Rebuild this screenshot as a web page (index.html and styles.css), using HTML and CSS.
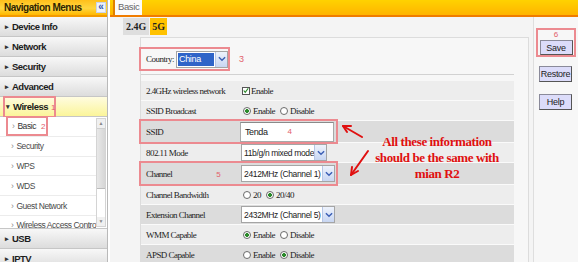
FILE: index.html
```html
<!DOCTYPE html>
<html lang="en">
<head>
    <meta charset="UTF-8" />
    <title>Wireless Basic</title>
    <link rel="stylesheet" href="styles.css">
</head>
<body>
<div class="page">
    <aside class="nav">
        <div class="nav-head">
            <span>Navigation Menus</span>
            <span class="collapse">&laquo;</span>
        </div>
        <div class="nav-item"><span class="tri">&#9656;</span>Device Info</div>
        <div class="nav-item"><span class="tri">&#9656;</span>Network</div>
        <div class="nav-item"><span class="tri">&#9656;</span>Security</div>
        <div class="nav-item"><span class="tri">&#9656;</span>Advanced</div>
        <div class="nav-item open">
            <span class="mark mark-wireless"><span class="tri">&#9662;</span>Wireless<i class="num">1</i></span>
        </div>
        <div class="sub">
            <ul class="sub-list">
                <li><span class="mark mark-basic"><span class="chev">&rsaquo;</span>Basic<i class="num">2</i></span></li>
                <li><span class="chev">&rsaquo;</span>Security</li>
                <li><span class="chev">&rsaquo;</span>WPS</li>
                <li><span class="chev">&rsaquo;</span>WDS</li>
                <li><span class="chev">&rsaquo;</span>Guest Network</li>
                <li><span class="chev">&rsaquo;</span>Wireless Access Control</li>
            </ul>
            <div class="scroll">
                <span class="scroll-btn">&#9650;</span>
                <span class="scroll-thumb"></span>
                <span class="scroll-track"></span>
                <span class="scroll-btn">&#9660;</span>
            </div>
        </div>
        <div class="nav-item"><span class="tri">&#9656;</span>USB</div>
        <div class="nav-item"><span class="tri">&#9656;</span>IPTV</div>
    </aside>

    <main class="main">
        <div class="topbar"><span class="tab">Basic</span></div>
        <div class="work">
            <section class="content">
                <div class="bands">
                    <span class="band">2.4G</span>
                    <span class="band on">5G</span>
                </div>
                <div class="panel">
                    <div class="country">
                        <span class="mark mark-country">
                            Country:
                            <span class="select country-select">
                                <span class="sel-text picked">China</span>
                                <span class="sel-btn"><svg width="8" height="6" viewBox="0 0 9 6"><path d="M1 1 L4.5 4.5 L8 1" fill="none" stroke="#3b5fb5" stroke-width="1.6"/></svg></span>
                            </span>
                        </span>
                        <i class="num">3</i>
                    </div>
                    <div class="rule"></div>

                    <div class="rows">
                        <div class="row">
                            <div class="pair">
                                <span class="lbl">2.4GHz wireless network</span>
                                <span class="val"><span class="check"><svg width="7" height="7" viewBox="0 0 8 8"><path d="M1 4 L3 6.5 L7 1" fill="none" stroke="#2a8a2a" stroke-width="1.6"/></svg></span>Enable</span>
                            </div>
                        </div>
                        <div class="row">
                            <div class="pair">
                                <span class="lbl">SSID Broadcast</span>
                                <span class="val"><span class="radio on"></span>Enable<span class="radio"></span>Disable</span>
                            </div>
                        </div>
                        <div class="row dark tall">
                            <div class="pair boxed">
                                <span class="lbl">SSID</span>
                                <span class="val"><span class="input">Tenda<i class="num">4</i></span></span>
                            </div>
                        </div>
                        <div class="row">
                            <div class="pair">
                                <span class="lbl">802.11 Mode</span>
                                <span class="val">
                                    <span class="select mode-select">
                                        <span class="sel-text">11b/g/n mixed mode</span>
                                        <span class="sel-btn"><svg width="8" height="6" viewBox="0 0 9 6"><path d="M1 1 L4.5 4.5 L8 1" fill="none" stroke="#3b5fb5" stroke-width="1.6"/></svg></span>
                                    </span>
                                </span>
                            </div>
                        </div>
                        <div class="row dark tall">
                            <div class="pair boxed">
                                <span class="lbl">Channel<i class="num">5</i></span>
                                <span class="val">
                                    <span class="select chan-select">
                                        <span class="sel-text">2412MHz (Channel 1)</span>
                                        <span class="sel-btn"><svg width="8" height="6" viewBox="0 0 9 6"><path d="M1 1 L4.5 4.5 L8 1" fill="none" stroke="#3b5fb5" stroke-width="1.6"/></svg></span>
                                    </span>
                                </span>
                            </div>
                        </div>
                        <div class="row">
                            <div class="pair">
                                <span class="lbl">Channel Bandwidth</span>
                                <span class="val"><span class="radio"></span>20<span class="radio on"></span>20/40</span>
                            </div>
                        </div>
                        <div class="row dark">
                            <div class="pair">
                                <span class="lbl">Extension Channel</span>
                                <span class="val">
                                    <span class="select chan-select">
                                        <span class="sel-text">2432MHz (Channel 5)</span>
                                        <span class="sel-btn"><svg width="8" height="6" viewBox="0 0 9 6"><path d="M1 1 L4.5 4.5 L8 1" fill="none" stroke="#3b5fb5" stroke-width="1.6"/></svg></span>
                                    </span>
                                </span>
                            </div>
                        </div>
                        <div class="row">
                            <div class="pair">
                                <span class="lbl">WMM Capable</span>
                                <span class="val"><span class="radio on"></span>Enable<span class="radio"></span>Disable</span>
                            </div>
                        </div>
                        <div class="row dark">
                            <div class="pair">
                                <span class="lbl">APSD Capable</span>
                                <span class="val"><span class="radio"></span>Enable<span class="radio on"></span>Disable</span>
                            </div>
                        </div>
                    </div>
                </div>
            </section>

            <aside class="actions">
                <div class="mark mark-save">
                    <i class="num">6</i>
                    <button class="btn">Save</button>
                </div>
                <button class="btn btn-restore">Restore</button>
                <button class="btn btn-help">Help</button>
            </aside>
        </div>
    </main>

    <!-- annotation drawn over the screenshot -->
    <svg class="arrows" width="578" height="262" viewBox="0 0 578 262">
        <g stroke="#e01010" stroke-width="2" fill="none" stroke-linecap="round">
            <path d="M362 137 L343 126"/>
            <path d="M343 126 L351 126 M343 126 L347 132"/>
            <path d="M368 151 L351 175"/>
            <path d="M351 175 L352 167 M351 175 L358 171"/>
        </g>
    </svg>
    <p class="note">All these information<br>should be the same with<br>mian R2</p>
</div>
</body>
</html>
```

FILE: styles.css
```css
* {
    box-sizing: border-box;
}

body {
    margin: 0;
    width: 578px;
    height: 262px;
    overflow: hidden;
    background: #fff;
    font-family: "Liberation Sans", Arial, sans-serif;
}

.page {
    position: relative;
    display: flex;
    height: 262px;
}

/* left navigation */

.nav {
    width: 108px;
    flex: none;
    display: flex;
    flex-direction: column;
    border-right: 1px solid #b9b9b9;
}

.nav-head {
    height: 17px;
    flex: none;
    display: flex;
    align-items: center;
    justify-content: space-between;
    padding: 0 1px 1px 4px;
    background: linear-gradient(#ffbf1a, #ffd640 55%, #ffb800);
    border-bottom: 2px solid #f39a00;
    color: #2e2200;
    font-size: 10px;
    font-weight: bold;
    letter-spacing: -0.5px;
    white-space: nowrap;
}

.collapse {
    width: 10px;
    height: 11px;
    background: #eef2fb;
    border: 1px solid #c9d3ea;
    color: #2f56b0;
    font-size: 10px;
    line-height: 8px;
    letter-spacing: 0;
    text-align: center;
}

.nav-item {
    height: 20px;
    flex: none;
    display: flex;
    align-items: center;
    padding-left: 5px;
    background: linear-gradient(#f8f8f8, #dcdcdc);
    border-bottom: 1px solid #c6c6c6;
    color: #1c1c1c;
    font-size: 9.5px;
    font-weight: bold;
    letter-spacing: -0.5px;
    white-space: nowrap;
}

.nav-item.open {
    padding-left: 3px;
    background: linear-gradient(#fffce0, #fbf59a);
}

.tri {
    font-size: 7px;
    margin-right: 3px;
    letter-spacing: 0;
    color: #333;
}

.mark {
    border: 2px solid #ec8a90;
}

.mark-wireless {
    display: flex;
    align-items: center;
    width: 53px;
    height: 22px;
    padding-left: 1px;
}

.num {
    color: #e2606a;
    font-style: normal;
    font-weight: normal;
    font-size: 8px;
    letter-spacing: 0;
    font-family: "Liberation Sans", Arial, sans-serif;
}

.mark-wireless .num {
    margin: 2px 0 0 3px;
}

.sub {
    height: 112px;
    flex: none;
    display: flex;
    background: #fff;
    border-bottom: 1px solid #c6c6c6;
}

.sub-list {
    flex: 1;
    margin: 0;
    padding: 0;
    list-style: none;
    overflow: hidden;
}

.sub-list li {
    height: 19.8px;
    display: flex;
    align-items: center;
    padding-left: 11px;
    border-bottom: 1px solid #ececec;
    color: #4a4a4a;
    font-size: 8.5px;
    letter-spacing: -0.45px;
    white-space: nowrap;
}

.sub-list li:first-child {
    padding-left: 6px;
}

.chev {
    color: #8a8a8a;
    margin-right: 3px;
}

.mark-basic {
    display: flex;
    align-items: center;
    width: 42px;
    height: 20px;
    padding-left: 4px;
    color: #333;
}

.mark-basic .num {
    margin-left: 5px;
}

.scroll {
    width: 10px;
    margin: 1px 1px 1px 0;
    display: flex;
    flex-direction: column;
    border: 1px solid #d4d4d4;
    background: #fff;
}

.scroll-btn {
    height: 9px;
    flex: none;
    background: #f0f0f0;
    color: #888;
    font-size: 5px;
    line-height: 9px;
    text-align: center;
}

.scroll-thumb {
    height: 61px;
    flex: none;
    background: linear-gradient(90deg, #e8e8e8, #d6d6d6);
    border-top: 1px solid #cfcfcf;
    border-bottom: 1px solid #bbb;
}

.scroll-track {
    flex: 1;
}

/* main area */

.main {
    flex: 1;
    margin-left: 2px;
    display: flex;
    flex-direction: column;
    background: #f4f4f4;
}

.topbar {
    height: 17px;
    flex: none;
    padding-left: 3px;
    display: flex;
    align-items: flex-end;
    background: linear-gradient(#ffd200, #ffb400);
    border-bottom: 2px solid #f07c00;
}

.tab {
    height: 15px;
    padding: 1px 3px 0;
    background: #fbfbfb;
    border-left: 2px solid #e08000;
    color: #666;
    font-size: 9.5px;
    letter-spacing: -0.4px;
}

.work {
    flex: 1;
    display: flex;
}

.content {
    flex: 1;
    display: flex;
    flex-direction: column;
    padding: 1px 4px 0 13px;
}

.bands {
    height: 17px;
    flex: none;
    display: flex;
}

.band {
    display: flex;
    align-items: center;
    padding: 0 3px;
    background: #dedede;
    color: #222;
    font: bold 10px "Liberation Serif", serif;
}

.band.on {
    margin-left: 1px;
    padding: 0 2px;
    background: #ffc200;
}

.panel {
    flex: 1;
    margin: 2px 0 0 17px;
    background: #f7f7f7;
    border: 1px solid #dcdcdc;
    border-bottom: none;
}

.country {
    display: flex;
    align-items: center;
    margin: 9px 0 0 -2px;
    height: 24px;
}

.mark-country {
    display: flex;
    align-items: center;
    width: 91px;
    height: 24px;
    padding-left: 5px;
    color: #222;
    font: 9px "Liberation Serif", serif;
    letter-spacing: -0.5px;
}

.country .num {
    margin-left: 9px;
    font-size: 9px;
}

.rule {
    width: 373px;
    margin-top: 3px;
    border-top: 1px solid #d2d2d2;
}

.rows {
    width: 373px;
    margin-top: 6px;
}

.row {
    height: 20px;
    display: flex;
    align-items: center;
    background: #ededed;
    border-bottom: 1px solid #fafafa;
}

.row.dark {
    background: #dcdcdc;
}

.row.tall {
    height: 22px;
}

.pair {
    display: flex;
    align-items: center;
    height: 100%;
}

.pair.boxed {
    width: 195px;
    outline: 2px solid #ec8a90;
}

.lbl {
    width: 99px;
    padding-left: 5px;
    color: #222;
    font: 9px "Liberation Serif", serif;
    letter-spacing: -0.55px;
    white-space: nowrap;
}

.lbl .num {
    margin-left: 44px;
}

.val {
    display: flex;
    align-items: center;
    color: #222;
    font: 9px "Liberation Serif", serif;
    letter-spacing: -0.5px;
}

.check {
    width: 8px;
    height: 8px;
    margin: 0 1px 0 2px;
    display: flex;
    align-items: center;
    justify-content: center;
    background: #fff;
    border: 1px solid #555;
}

.radio {
    width: 8px;
    height: 8px;
    margin: 0 2px 0 5px;
    border-radius: 50%;
    border: 1px solid #6b6b6b;
    background: #fff;
}

.radio.on {
    background: radial-gradient(circle, #2b8a2b 0 1.6px, #fff 2.2px);
}

.val .radio:first-child {
    margin-left: 3px;
}

.input {
    width: 94px;
    height: 20px;
    display: flex;
    align-items: center;
    padding-left: 4px;
    background: #fff;
    border: 1px solid #a8a8a8;
    border-top-color: #8a8a8a;
    color: #222;
    font: 9px "Liberation Sans", Arial, sans-serif;
    letter-spacing: -0.4px;
}

.input .num {
    margin-left: 20px;
}

.select {
    height: 17px;
    display: flex;
    align-items: stretch;
    background: #fff;
    border: 1px solid #a5a5a5;
    font: 8.5px "Liberation Sans", Arial, sans-serif;
    letter-spacing: -0.35px;
    color: #222;
}

.sel-text {
    flex: 1;
    display: flex;
    align-items: center;
    padding-left: 2px;
    white-space: nowrap;
    overflow: hidden;
}

.sel-btn {
    width: 12px;
    display: flex;
    align-items: center;
    justify-content: center;
    background: linear-gradient(#eef3fc, #c8d6f2);
    border-left: 1px solid #b7c6e6;
}

.country-select {
    width: 53px;
    margin-left: 2px;
    font-size: 9px;
}

.picked {
    margin: 1px;
    padding-left: 1px;
    background: #2f64c8;
    color: #fff;
}

.mode-select {
    width: 86px;
    margin-left: 1px;
}

.chan-select {
    width: 94px;
    margin-left: 1px;
}

/* right button column */

.actions {
    width: 45px;
    flex: none;
    display: flex;
    flex-direction: column;
    align-items: flex-start;
    padding: 11px 0 0 2px;
    background: #f7f7f7;
    border-left: 1px solid #dedede;
}

.mark-save {
    width: 40px;
    height: 29px;
    display: flex;
    flex-direction: column;
    align-items: center;
    padding-top: 1px;
}

.mark-save .num {
    height: 9px;
    line-height: 8px;
}

.btn {
    height: 16px;
    width: 33px;
    padding: 0;
    margin-left: 3px;
    background: #dcdcfa;
    border: 1px solid #8a8a9a;
    border-right-color: #555;
    border-bottom-color: #555;
    color: #222;
    font: 9px "Liberation Sans", Arial, sans-serif;
    letter-spacing: -0.3px;
}

.mark-save .btn {
    margin-left: 0;
    height: 15px;
}

.btn-restore {
    margin-top: 9px;
}

.btn-help {
    margin-top: 12px;
}

/* annotation */

.arrows {
    position: absolute;
    left: 0;
    top: 0;
    pointer-events: none;
}

.note {
    position: absolute;
    left: 368px;
    top: 134px;
    width: 138px;
    margin: 0;
    text-align: center;
    color: #e01010;
    font: bold 13px/16px "Liberation Serif", serif;
    letter-spacing: -0.4px;
}
```
